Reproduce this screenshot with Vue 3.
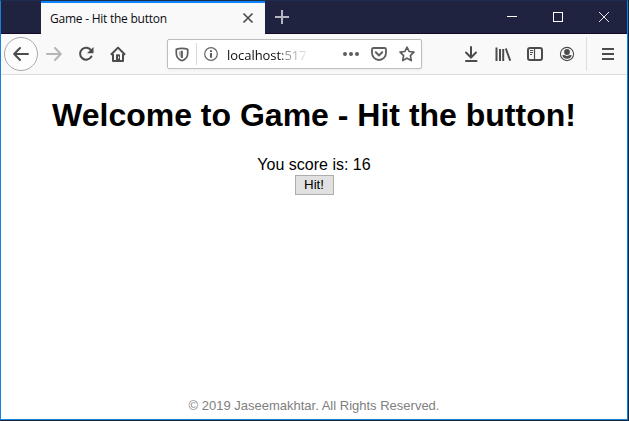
<script setup>
import { ref } from 'vue'

const title = 'Game - Hit the button'
const score = ref(16)
</script>

<template>
  <div class="desktop">
    <div class="window">
      <header class="titlebar">
        <div class="tab">
          <span class="tab-title">{{ title }}</span>
          <svg class="tab-close" width="12" height="12" viewBox="0 0 12 12"><path d="M1.5 1.5l9 9M10.5 1.5l-9 9" stroke="#4c4c4f" stroke-width="1.7" /></svg>
        </div>
        <svg class="new-tab" width="14" height="14" viewBox="0 0 14 14"><path d="M7 0v14M0 7h14" stroke="#b5b6c0" stroke-width="2" /></svg>
        <div class="controls">
          <svg width="46" height="33" viewBox="0 0 46 33"><path d="M18 15.5h10" stroke="#fff" /></svg>
          <svg width="46" height="33" viewBox="0 0 46 33"><rect x="18.5" y="11.5" width="9" height="9" fill="none" stroke="#fff" /></svg>
          <svg width="46" height="33" viewBox="0 0 46 33"><path d="M18 11l10 10M28 11l-10 10" stroke="#fff" stroke-width=".9" /></svg>
        </div>
      </header>

      <nav class="toolbar">
        <button class="back">
          <svg class="icon" viewBox="0 0 16 16"><path d="M15 8H1.5M7 2L1.2 8 7 14" stroke-linecap="round" stroke-linejoin="round" /></svg>
        </button>
        <span class="tool"><svg class="icon dim" viewBox="0 0 16 16"><path d="M1 8h13.5M9 2l5.8 6L9 14" stroke-linecap="round" stroke-linejoin="round" /></svg></span>
        <span class="tool"><svg class="icon" viewBox="0 0 16 16"><path d="M13.2 4.5A6 6 0 1 0 13.4 10.5" stroke-linecap="round" /><path class="solid" d="M15.5 1v6.2H9z" /></svg></span>
        <span class="tool"><svg class="icon" viewBox="0 0 16 16"><path d="M.9 8.7L8 1.6l7.1 7.1M3 8v7h10V8" stroke-linejoin="round" /><path class="solid" d="M6 15V9.3Q6 8.3 7 8.3h2q1 0 1 1V15z" /><path d="M8.5 10.5v2" stroke="#f9f9fa" stroke-width="1" /></svg></span>

        <div class="urlbar">
          <svg class="shield" width="14" height="15" viewBox="0 0 14 15"><path d="M7 1.3Q10 1.3 12.7 2.3v3.9c0 3.7-2.500 6.400-5.700 7.500C3.800 12.600 1.300 9.900 1.300 6.200V2.300Q4 1.300 7 1.300z" fill="#fff" stroke="#5d5d5f" stroke-width="1.700" stroke-linejoin="round" /><path d="M7 4v7.200C4.800 9.900 3.900 8.300 3.900 6V4.400z" fill="#b0b0b1" /><path d="M7 3.800v7.300" stroke="#5d5d5f" stroke-width="1.800" /></svg>
          <i class="divider"></i>
          <svg class="info" width="14" height="14" viewBox="0 0 14 14"><circle cx="7" cy="7" r="6.3" fill="none" stroke="#666668" stroke-width="1.2" /><path d="M7 6v4.8M7 3.2v1.7" stroke="#59595b" stroke-width="2" /></svg>
          <span class="address">localhost:517</span>
          <svg class="dots" width="16" height="4" viewBox="0 0 16 4"><circle cx="2" cy="2" r="2" /><circle cx="8" cy="2" r="2" /><circle cx="14" cy="2" r="2" /></svg>
          <svg class="icon pocket" viewBox="0 0 16 16"><path d="M2.5 2h11q1.5 0 1.5 1.5V7A7 7 0 0 1 1 7V3.5Q1 2 2.5 2z" stroke-width="1.8" /><path d="M4.8 6.3L8 9.4l3.2-3.1" stroke-linecap="round" /></svg>
          <svg class="icon star" viewBox="0 0 16 16"><path d="M8 1.2l2.1 4.3 4.8.7-3.5 3.4.9 5L8 12.2l-4.3 2.4.9-5L1.1 6.2l4.8-.7z" stroke-width="1.7" stroke-linejoin="round" /></svg>
        </div>

        <div class="actions">
          <svg class="icon" viewBox="0 0 16 16"><path d="M8 1v10.5M3 6.5l5 5 5-5M3 15h10.5" stroke-width="2" stroke-linecap="round" /></svg>
          <svg class="icon" viewBox="0 0 16 16"><path d="M1.5 1.5V15M5 3v12M8.2 3v12M10.8 2.5l4.4 12.2" stroke-width="2" /></svg>
          <svg class="icon" viewBox="0 0 16 16"><rect x="1" y="2" width="14" height="12" rx="2" /><path d="M7.5 2v12" stroke-width="1.2" /><path d="M3 4.5h3M3 6.5h3M3 8.5h2" stroke-width="1" /></svg>
          <svg class="icon" viewBox="0 0 16 16"><circle cx="8" cy="8" r="6.6" stroke-width="1.1" /><circle class="solid" cx="8" cy="6" r="2.9" /><path class="solid" d="M3.3 9.200Q5.200 8.800 6 9.300 8 10.500 10 9.300q.8-.5 2.700-.1Q11.700 12.700 8 12.700T3.300 9.200z" /></svg>
        </div>
        <div class="menu">
          <svg width="12" height="12" viewBox="0 0 12 12"><path d="M0 1h12M0 6h12M0 11h12" stroke="#4c4c4f" stroke-width="2" /></svg>
        </div>
      </nav>

      <main class="page">
        <h1>Welcome to {{ title }}!</h1>
        <div class="score">You score is: {{ score }}</div>
        <button class="hit" @click="score++">Hit!</button>
        <footer>© 2019 Jaseemakhtar. All Rights Reserved.</footer>
      </main>
    </div>
  </div>
</template>

<style>
body { margin: 0; overflow: hidden; }
</style>

<style scoped>
* { box-sizing: border-box; }
svg { display: block; flex: none; }
.desktop { width: 629px; height: 421px; background: #14263b; }
.window {
  width: 628px; height: 420px; display: flex; flex-direction: column;
  border: 1px solid #1481dc; border-top-color: #1d2d50; background: #fff;
}
.titlebar { height: 33px; flex: none; display: flex; background: #202340; border-bottom: 1px solid #16082b; }
.tab {
  width: 224px; height: 33px; margin-left: 40px; padding: 1px 11px 0 9px;
  display: flex; align-items: center; justify-content: space-between;
  border-top: 2px solid #0a84ff; background: #f9f9fa;
}
.tab-title { padding-bottom: 1px; font: 12px/16px "Open Sans", "Noto Sans", sans-serif; letter-spacing: -0.24px; color: #0c0c0d; white-space: nowrap; }
.tab-close { margin-bottom: 2px; }
.new-tab { margin: 9px 0 0 10px; }
.controls { display: flex; margin-left: auto; }
.toolbar {
  height: 41px; flex: none; display: flex; align-items: center; padding-left: 3px;
  background: #f9f9fa; border-bottom: 1px solid #dedede;
}
.icon { width: 16px; height: 16px; fill: none; stroke: #4c4c4f; stroke-width: 2; }
.icon .solid { fill: #4c4c4f; stroke: none; }
.dim { stroke: #b5b5b6; }
.back {
  width: 34px; height: 34px; padding: 0; display: flex; align-items: center; justify-content: center;
  border: 1px solid #aaa; border-radius: 50%; background: #fdfdfd;
}
.tool { width: 32px; display: flex; justify-content: center; }
.urlbar {
  width: 255px; height: 30px; margin-left: 33px; padding-left: 7px; display: flex; align-items: center;
  border: 1px solid #bdbdbd; border-radius: 2px; background: #fff; box-shadow: 0 1px 3px rgba(0, 0, 0, .06);
}
.divider { width: 1px; height: 22px; margin: 0 7px; background: #d9d9db; }
.address {
  width: 84px; margin-left: 9px; padding-top: 1px; font: 13px/18px "Open Sans", "Noto Sans", sans-serif; letter-spacing: -0.04px;
  white-space: nowrap; overflow: hidden;
  background: linear-gradient(90deg, #0c0c0d 53px, #888 58px, #aaa 67px, #fff 83px);
  background-clip: text; color: transparent;
}
.dots { margin-left: 32px; fill: #5d5d5f; }
.pocket { margin-left: 12px; stroke: #5d5d5f; }
.star { margin-left: 12px; stroke: #5d5d5f; }
.actions { display: flex; gap: 16px; margin-left: 41px; }
.menu { height: 34px; margin-left: 11px; padding-left: 15px; display: flex; align-items: center; border-left: 1px solid #dedede; }
.page {
  flex: 1; display: flex; flex-direction: column; align-items: center;
  font: 16px/18px "Liberation Sans", Arial, sans-serif; color: #000;
}
h1 { margin: 21px 0 22px; font-size: 32px; line-height: 38px; white-space: nowrap; }
.score { height: 19px; }
.hit {
  width: 39px; height: 20px; padding: 0; border: 1px solid #adadad; background: #e1e1e1;
  font: 13.333px/16px "Liberation Sans", Arial, sans-serif; color: #000;
}
footer { margin-top: auto; padding-bottom: 5px; font-size: 13px; line-height: 16px; color: #808080; }
</style>
